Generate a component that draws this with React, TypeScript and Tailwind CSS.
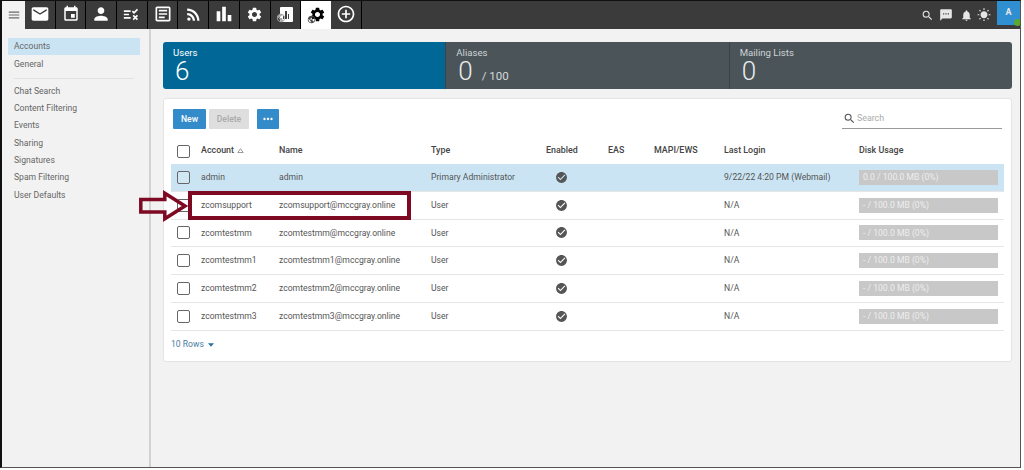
import {
  MdAddCircleOutline,
  MdBarChart,
  MdCheckCircle,
  MdEmail,
  MdEvent,
  MdMenu,
  MdMoreHoriz,
  MdNotifications,
  MdOutlineArticle,
  MdPerson,
  MdPublic,
  MdRssFeed,
  MdSearch,
  MdSettings,
  MdSms,
  MdWbSunny,
} from "react-icons/md";

const rows = [
  { account: "admin", name: "admin", type: "Primary Administrator", login: "9/22/22 4:20 PM (Webmail)", disk: "0.0 / 100.0 MB (0%)" },
  { account: "zcomsupport", name: "zcomsupport@mccgray.online", type: "User", login: "N/A", disk: "- / 100.0 MB (0%)" },
  { account: "zcomtestmm", name: "zcomtestmm@mccgray.online", type: "User", login: "N/A", disk: "- / 100.0 MB (0%)" },
  { account: "zcomtestmm1", name: "zcomtestmm1@mccgray.online", type: "User", login: "N/A", disk: "- / 100.0 MB (0%)" },
  { account: "zcomtestmm2", name: "zcomtestmm2@mccgray.online", type: "User", login: "N/A", disk: "- / 100.0 MB (0%)" },
  { account: "zcomtestmm3", name: "zcomtestmm3@mccgray.online", type: "User", login: "N/A", disk: "- / 100.0 MB (0%)" },
];

const gridCols = "grid grid-cols-[30px_78px_152px_115px_62px_46px_70px_135px_145px] items-center";

function TasksIcon() {
  return (
    <svg width="17" height="17" viewBox="0 0 20 20" fill="none" stroke="currentColor" strokeWidth="2">
      <path d="M1 6h8M1 10h6M1 14h8" />
      <path d="M11 6l2 2 4-4M12 11l5 5M17 11l-5 5" />
    </svg>
  );
}

function ChartGlobeIcon() {
  return (
    <span className="relative flex h-[16px] w-[16px] items-center justify-center">
      <span className="ml-[2px] flex h-[15px] w-[13px] items-end justify-center gap-[1px] rounded-[1px] bg-white pb-[3px]">
        <span className="h-[3px] w-[1px] bg-[#404040]" />
        <span className="h-[8px] w-[2px] bg-[#404040]" />
        <span className="h-[5px] w-[1px] bg-[#404040]" />
      </span>
      <MdPublic className="absolute -bottom-[1px] -left-[1px] text-[#a9a9a9]" size={10} />
    </span>
  );
}

const tabs = [
  <MdEmail size={20} />,
  <MdEvent size={18} />,
  <MdPerson size={20} />,
  <TasksIcon />,
  <MdOutlineArticle size={20} />,
  <MdRssFeed size={19} />,
  <MdBarChart size={22} />,
  <MdSettings size={17} />,
  <ChartGlobeIcon />,
];

function TopBar() {
  return (
    <div className="flex h-[28px] shrink-0 bg-[#3b3b3b] text-white">
      <div className="flex w-[23px] items-center justify-center bg-[#f2f2f2] text-[#6b6b6b]">
        <MdMenu size={14} />
      </div>
      {tabs.map((icon, i) => (
        <div key={i} className="flex w-[30.7px] items-center justify-center border-r border-black pb-[2px]">
          {icon}
        </div>
      ))}
      <div className="relative flex w-[30px] items-center justify-center bg-white pb-[2px] text-black">
        <MdSettings size={17} className="ml-[2px]" />
        <MdPublic size={9} className="absolute bottom-[5px] left-[6px] text-[#4a4a4a]" />
      </div>
      <div className="flex w-[31px] items-center justify-center border-r border-black pb-[2px]">
        <MdAddCircleOutline size={20} />
      </div>
      <div className="flex flex-1 items-center justify-end text-[#e6e6e6]">
        <MdSearch size={13} />
        <MdSms size={14} className="ml-[5.5px]" />
        <MdNotifications size={13} className="ml-[6.5px]" />
        <MdWbSunny size={14} className="ml-[4.5px]" />
        <div className="relative ml-[6px] flex h-[24px] w-[23px] items-center justify-center self-start bg-[#2f8fd0] text-[9px] font-bold">
          A
          <span className="absolute -right-[1px] -bottom-[1px] h-[7px] w-[7px] rounded-full bg-[#5aa92a]" />
        </div>
      </div>
    </div>
  );
}

function Sidebar() {
  const first = ["Accounts", "General"];
  const second = ["Chat Search", "Content Filtering", "Events", "Sharing", "Signatures", "Spam Filtering", "User Defaults"];
  return (
    <div className="w-[149px] shrink-0 border-r-2 border-[#d2d2d2] pt-[9px] pl-[6px] text-[8.6px] text-[#666]">
      {first.map((label, i) => (
        <div key={label} className={`flex h-[17.3px] w-[132px] items-center pl-[6px] ${i === 0 ? "bg-[#cbe4f3]" : ""}`}>
          {label}
        </div>
      ))}
      <div className="mt-[5px] mb-[4px] ml-[6px] h-[1px] w-[120px] bg-[#e0e0e0]" />
      {second.map((label) => (
        <div key={label} className="flex h-[17.3px] items-center pl-[6px]">
          {label}
        </div>
      ))}
    </div>
  );
}

function StatCard({ label, value, extra, blue }: { label: string; value: string; extra?: string; blue?: boolean }) {
  return (
    <div className={`flex-1 pt-[5px] pl-[10px] ${blue ? "bg-[#006796] text-white" : "border-l border-[#3a4347] bg-[#4a5459] text-[#ececec]"}`}>
      <div className={`text-[9.6px] leading-[12px] ${blue ? "" : "text-[#cfd3d5]"}`}>{label}</div>
      <div className="ml-[2px] flex items-baseline leading-[24px]">
        <span className="text-[26px] font-light">{value}</span>
        {extra && <span className="ml-[9px] text-[11.5px] text-[#d6d9da]">{extra}</span>}
      </div>
    </div>
  );
}

function Checkbox() {
  return <span className="h-[13px] w-[13px] rounded-[2px] border border-[#666] bg-white/10" />;
}

function UserTable() {
  return (
    <div className="ml-[7px] w-[833px]">
      <div className={`${gridCols} h-[26px] text-[8.9px] font-medium text-[#444]`}>
        <div className="flex pl-[6px]">
          <Checkbox />
        </div>
        <div className="flex items-center gap-[3px]">
          Account
          <svg width="7" height="5" viewBox="0 0 7 5" fill="none" stroke="#999">
            <path d="M3.5 .7L6.2 4.5H.8z" />
          </svg>
        </div>
        <div>Name</div>
        <div>Type</div>
        <div>Enabled</div>
        <div>EAS</div>
        <div>MAPI/EWS</div>
        <div>Last Login</div>
        <div>Disk Usage</div>
      </div>
      {rows.map((row, i) => (
        <div key={row.account} className={`${gridCols} h-[27.8px] border-b border-[#e6e6e6] text-[8.6px] text-[#555] ${i === 0 ? "bg-[#cbe4f3]" : ""}`}>
          <div className="flex pl-[6px]">
            <Checkbox />
          </div>
          <div>{row.account}</div>
          <div>{row.name}</div>
          <div>{row.type}</div>
          <div className="pl-[9px] text-[#555]">
            <MdCheckCircle size={13} />
          </div>
          <div />
          <div />
          <div>{row.login}</div>
          <div className="flex h-[15px] w-[139px] items-center bg-[#c8c8c8] pl-[4px] text-[#eeeeee]">{row.disk}</div>
        </div>
      ))}
    </div>
  );
}

export default function App() {
  return (
    <div className="h-[470px] w-[1024px] overflow-hidden bg-white">
      <div className="relative flex h-[468px] w-[1021px] flex-col overflow-hidden border-t border-r border-b border-l-[2px] border-t-[#111] border-r-[#555] border-b-[#555] border-l-[#111] bg-[#f2f2f2] font-['Roboto',sans-serif]">
        <TopBar />
        <div className="flex flex-1">
          <Sidebar />
          <div className="flex-1 pt-[13px] pl-[12px]">
            <div className="flex h-[47px] w-[849px] overflow-hidden rounded-[3px]">
              <StatCard label="Users" value="6" blue />
              <StatCard label="Aliases" value="0" extra="/ 100" />
              <StatCard label="Mailing Lists" value="0" />
            </div>
            <div className="mt-[9px] h-[264px] w-[849px] rounded-[3px] border border-[#e4e4e4] bg-white">
              <div className="flex h-[39px] items-center pt-[1px] pr-[9px] pl-[9px] text-[8.6px] font-medium">
                <button className="h-[20px] w-[33px] rounded-[1px] bg-[#348bc9] text-white">New</button>
                <button className="ml-[3px] h-[20px] w-[40px] rounded-[1px] bg-[#dedede] text-[#aaa]">Delete</button>
                <button className="ml-[8px] flex h-[20px] w-[22px] items-center justify-center rounded-[1px] bg-[#348bc9] text-white">
                  <MdMoreHoriz size={14} />
                </button>
                <div className="ml-auto flex h-[20px] w-[160px] items-center gap-[1px] border-b border-[#999] pl-[1px] text-[8.8px] font-normal text-[#aaa]">
                  <MdSearch size={13} className="text-[#555]" />
                  Search
                </div>
              </div>
              <UserTable />
              <div className="mt-[6px] ml-[7px] flex h-[16px] items-center gap-[4px] text-[8.6px] text-[#4b7da0]">
                10 Rows
                <svg width="6" height="4" viewBox="0 0 7 4" fill="#2c6f9b">
                  <path d="M0 0h7L3.5 4z" />
                </svg>
              </div>
            </div>
          </div>
        </div>
        {/* annotation over the zcomsupport row */}
        <div className="absolute top-[190px] left-[186px] h-[29px] w-[223px] border-[4px] border-[#7d0a22]" />
        <svg className="absolute top-[189px] left-[137px]" width="50" height="32" viewBox="0 0 50 32" fill="none" stroke="#7d0a22" strokeWidth="3.5">
          <path d="M1.8 9.5h24V3.2L46 16 25.800 28.800V22H1.800z" />
        </svg>
      </div>
    </div>
  );
}
